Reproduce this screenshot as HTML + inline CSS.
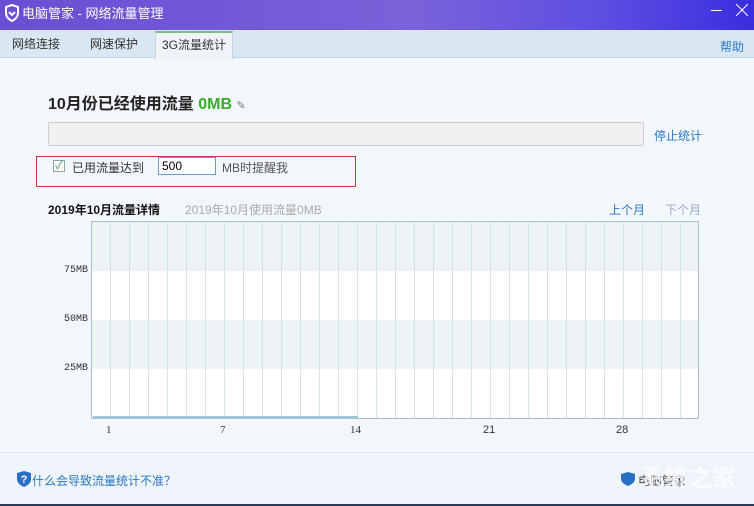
<!DOCTYPE html>
<html><head><meta charset="utf-8"><style>
*{margin:0;padding:0;box-sizing:border-box}
body{width:754px;height:506px;overflow:hidden;position:relative;background:#f3f7fb;font-family:"Liberation Sans","Noto Sans CJK SC",sans-serif;font-size:12px;color:#333}
.abs{position:absolute}
#title{left:0;top:0;width:754px;height:30px;background:linear-gradient(90deg,#6a4ed3 0%,#7a62da 55%,#5d4ee2 80%,#3a2edf 100%)}
#tabs{left:0;top:30px;width:754px;height:28px;background:#d9e7f3;border-bottom:1px solid #c4d4e2}
.tab{top:0;height:28px;line-height:28px;font-size:12px;color:#333}
a{color:#2a78c6;text-decoration:none}
</style></head><body>
<div id="title" class="abs">
 <svg class="abs" style="left:4px;top:4px" width="16" height="18" viewBox="0 0 16 18"><path d="M2 3 L8 1 L14 3 L14 9 Q14 14 8 17 Q2 14 2 9 Z" fill="none" stroke="#fff" stroke-width="2"/><path d="M5 8 L8 11 L11 8" fill="none" stroke="#fff" stroke-width="2"/></svg>
 <div class="abs" style="left:22px;top:3px;color:#fff;font-size:13px">电脑管家 - 网络流量管理</div>
 <div class="abs" style="left:711px;top:10px;width:11px;height:1px;background:#fff"></div>
 <svg class="abs" style="left:736px;top:4px" width="12" height="12"><path d="M0 0L12 12M12 0L0 12" stroke="#fff" stroke-width="1"/></svg>
</div>
<div id="tabs" class="abs">
 <div class="abs tab" style="left:12px">网络连接</div>
 <div class="abs tab" style="left:90px">网速保护</div>
 <div class="abs" style="left:155px;top:1px;width:78px;height:28px;background:#eef4fa;border-top:2px solid #7bbf7b;border-left:1px solid #c4d4e2;border-right:1px solid #c4d4e2;line-height:25px;text-align:center">3G流量统计</div>
 <a class="abs" style="left:720px;top:8px;font-size:12px">帮助</a>
</div>
<div class="abs" style="left:48px;top:90px;font-size:16px;font-weight:bold;color:#222">10月份已经使用流量 <span style="color:#3aaa2a">0MB</span> <span style="font-size:11px;color:#777;font-weight:normal">✎</span></div>
<div class="abs" style="left:48px;top:122px;width:596px;height:24px;background:#f0f0f0;border:1px solid #ccc;border-radius:2px"></div>
<a class="abs" style="left:654px;top:127px">停止统计</a>
<div class="abs" style="left:36px;top:156px;width:320px;height:31px;border:1px solid #c8323c"></div>
<div class="abs" style="left:53px;top:160px;width:12px;height:12px;border:1px solid #8aa;background:#fff;color:#3a9a3a;font-size:11px;line-height:10px;text-align:center">✓</div>
<div class="abs" style="left:72px;top:159px">已用流量达到</div>
<div class="abs" style="left:158px;top:157px;width:58px;height:18px;border:1px solid #6a9ac8;background:#fff;padding-left:3px;line-height:16px;color:#000">500</div>
<div class="abs" style="left:222px;top:159px;color:#555">MB时提醒我</div>
<div class="abs" style="left:48px;top:201px;font-weight:bold;color:#111">2019年10月流量详情</div>
<div class="abs" style="left:185px;top:201px;color:#aaa">2019年10月使用流量0MB</div>
<a class="abs" style="left:609px;top:201px">上个月</a>
<div class="abs" style="left:665px;top:201px;color:#9ac">下个月</div>
<div class="abs" style="left:91px;top:221px;width:608px;height:198px;border:1px solid #a9c0c8;background:linear-gradient(#edf2f5 0,#edf2f5 49px,#fff 49px,#fff 98px,#edf2f5 98px,#edf2f5 147px,#fff 147px);overflow:hidden">
 <div class="abs" style="left:0;top:0;width:606px;height:196px;background:repeating-linear-gradient(90deg,transparent 0,transparent 18px,#d3e1e8 18px,#d3e1e8 19px)"></div>
 <div class="abs" style="left:1px;top:194px;width:265px;height:2px;background:#9cc3d8"></div>
</div>
<div class="abs" style="left:64px;top:265px;font-family:'Liberation Mono',monospace;font-size:10px;color:#333">75MB</div>
<div class="abs" style="left:64px;top:314px;font-family:'Liberation Mono',monospace;font-size:10px;color:#333">50MB</div>
<div class="abs" style="left:64px;top:363px;font-family:'Liberation Mono',monospace;font-size:10px;color:#333">25MB</div>
<div class="abs" style="left:106px;top:424px;font-family:'Liberation Serif',serif;font-size:11px">1</div>
<div class="abs" style="left:220px;top:424px;font-family:'Liberation Serif',serif;font-size:11px">7</div>
<div class="abs" style="left:350px;top:424px;font-family:'Liberation Serif',serif;font-size:11px">14</div>
<div class="abs" style="left:483px;top:424px;font-size:11px">21</div>
<div class="abs" style="left:616px;top:424px;font-size:11px">28</div>
<div class="abs" style="left:0;top:452px;width:754px;height:1px;background:#dde6ee"></div>
<div class="abs" style="left:0;top:453px;width:754px;height:51px;background:#eef4f9"></div>
<svg class="abs" style="left:16px;top:471px" width="16" height="16" viewBox="0 0 16 16"><path d="M1 2 L8 0 L15 2 L15 8 Q15 13 8 16 Q1 13 1 8 Z" fill="#2a6fc6"/><text x="8" y="12" font-size="11" font-weight="bold" fill="#fff" text-anchor="middle" font-family="Liberation Sans">?</text></svg>
<a class="abs" style="left:32px;top:472px">什么会导致流量统计不准？</a>
<svg class="abs" style="left:620px;top:472px" width="16" height="14" viewBox="0 0 16 14"><path d="M1 2 L8 0 L15 2 L15 7 Q15 11 8 14 Q1 11 1 7 Z" fill="#2a6fc6"/></svg>
<div class="abs" style="left:638px;top:472px;color:#444;font-size:12px">电脑管家</div>
<div class="abs" style="left:640px;top:458px;color:#fff;font-size:24px;font-weight:bold;opacity:.75">系统之家</div>
<div class="abs" style="left:0;top:504px;width:754px;height:2px;background:#2a3a5a"></div>
</body></html>
